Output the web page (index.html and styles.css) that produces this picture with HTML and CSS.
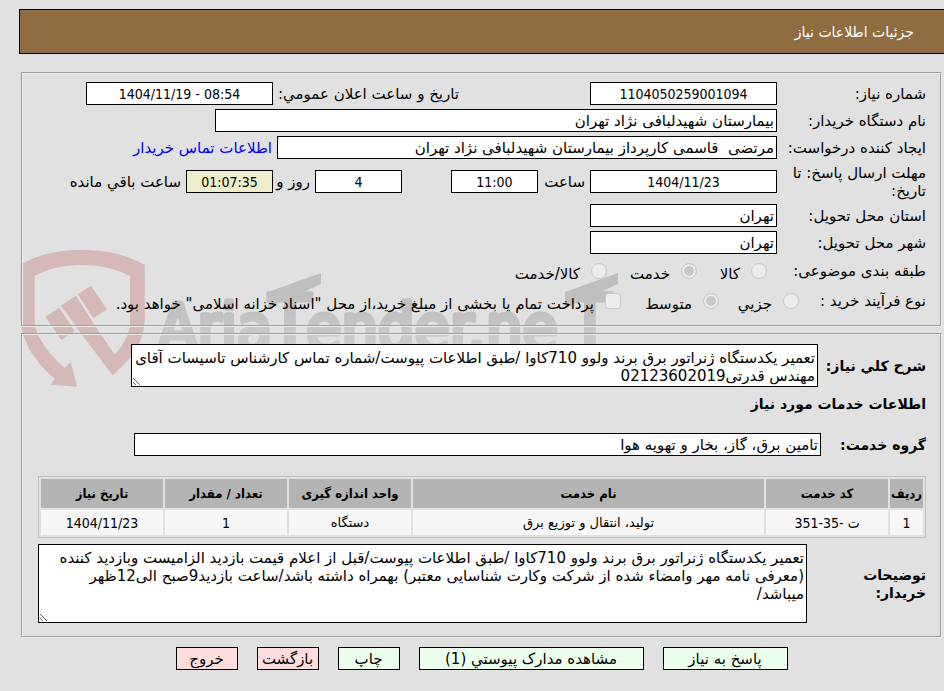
FILE: index.html
```html
<!DOCTYPE html>
<html lang="fa" dir="rtl">
<head>
<meta charset="utf-8">
<title>جزئیات اطلاعات نیاز</title>
<link rel="stylesheet" href="styles.css">
</head>
<body>
<header class="page-header"><h1>جزئیات اطلاعات نیاز</h1></header>
<main class="page">
  <svg class="watermark" width="610" height="144" viewBox="0 0 610 144" direction="ltr" aria-hidden="true">
    <defs>
      <linearGradient id="fade" gradientUnits="userSpaceOnUse" x1="0" y1="25" x2="0" y2="106">
        <stop offset="0.4" stop-color="#bfbfbf"/>
        <stop offset="1" stop-color="#cfcfcf"/>
      </linearGradient>
    </defs>
    <g transform="translate(-20 -18) scale(0.33333)" fill="#d5b8b8">
      <path d="M62 104C120 70 180 60 245 60C320 60 380 75 434 104L434 270C430 340 400 380 338 436L228 290L272 268L344 374C370 345 388 310 390 290L390 138C345 115 300 105 245 105C200 105 150 112 104 138L104 270C104 320 150 375 194 414L212 396L231 470L152 464L165 447C110 400 66 340 62 270Z"/>
      <path d="M136 260L178 233L224 303L184 330ZM182 227L228 197L274 270L236 297ZM233 193L273 167L321 238L280 265Z"/>
    </g>
    <text class="watermark-name" y="102"><tspan x="138">Aria</tspan><tspan class="watermark-cap" x="249">T</tspan><tspan x="286">ender.ne</tspan><tspan class="watermark-cap" x="549">T</tspan></text>
    <path fill="#bfbfbf" d="M248 44L301 25V36L248 60ZM545 44L598 25V36L545 60Z"/>
  </svg>

  <fieldset class="panel panel-summary">
    <div class="row">
      <label class="caption" for="need-no">شماره نیاز:</label>
      <input class="box code w-date" id="need-no" value="1104050259001094" readonly>
      <label class="announce" for="announce">تاریخ و ساعت اعلان عمومي:</label>
      <input class="box code w-date" id="announce" value="1404/11/19 - 08:54" readonly>
    </div>
    <div class="row">
      <label class="caption" for="org">نام دستگاه خریدار:</label>
      <input class="box w-org" id="org" value="بیمارستان شهیدلبافی نژاد تهران" readonly>
    </div>
    <div class="row">
      <label class="caption" for="creator">ایجاد کننده درخواست:</label>
      <input class="box w-creator" id="creator" value="مرتضی  قاسمی کارپرداز بیمارستان شهیدلبافی نژاد تهران" readonly>
      <a class="contact" href="#contact">اطلاعات تماس خریدار</a>
    </div>
    <div class="row row-deadline">
      <label class="caption" for="deadline">مهلت ارسال پاسخ: تا تاریخ:</label>
      <input class="box code w-date" id="deadline" value="1404/11/23" readonly>
      <label class="unit" for="hour">ساعت</label>
      <input class="box code w-short" id="hour" value="11:00" readonly>
      <input class="box code w-short days" id="days" value="4" readonly>
      <label class="unit unit-days" for="days">روز و</label>
      <input class="box code w-short countdown" id="countdown" value="01:07:35" readonly>
      <label class="unit-left" for="countdown">ساعت باقي مانده</label>
    </div>
    <div class="row">
      <label class="caption" for="province">استان محل تحویل:</label>
      <input class="box w-date" id="province" value="تهران" readonly>
    </div>
    <div class="row">
      <label class="caption" for="city">شهر محل تحویل:</label>
      <input class="box w-date" id="city" value="تهران" readonly>
    </div>
    <div class="row row-options" role="radiogroup" aria-labelledby="subject">
      <span class="caption caption-subject" id="subject">طبقه بندی موضوعی:</span>
      <label class="option option-goods"><input type="radio" name="subject" disabled><span>کالا</span></label>
      <label class="option option-service"><input type="radio" name="subject" checked disabled><span>خدمت</span></label>
      <label class="option"><input type="radio" name="subject" disabled><span>کالا/خدمت</span></label>
    </div>
    <div class="row row-options" role="group" aria-labelledby="process">
      <span class="caption caption-process" id="process">نوع فرآیند خرید :</span>
      <label class="option option-minor"><input type="radio" name="process" disabled><span>جزیي</span></label>
      <label class="option option-medium"><input type="radio" name="process" checked disabled><span>متوسط</span></label>
      <label class="option"><input type="checkbox" disabled><span>پرداخت تمام یا بخشی از مبلغ خرید،از محل "اسناد خزانه اسلامی" خواهد بود.</span></label>
    </div>
  </fieldset>

  <fieldset class="panel panel-details">
    <div class="row row-desc">
      <label class="strong desc-caption" for="desc">شرح کلي نیاز:</label>
      <textarea class="box area-desc" id="desc" readonly>تعمیر یکدستگاه ژنراتور برق برند ولوو 710کاوا /طبق اطلاعات پیوست/شماره تماس کارشناس تاسیسات آقای مهندس قدرتی02123602019</textarea>
    </div>
    <h2 class="strong section-title">اطلاعات خدمات مورد نیاز</h2>
    <div class="row row-group">
      <label class="strong group-caption" for="group">گروه خدمت:</label>
      <input class="box w-group" id="group" value="تامین برق، گاز، بخار و تهویه هوا" readonly>
    </div>
    <table class="services">
      <colgroup><col class="c-row"><col class="c-code"><col><col class="c-code"><col class="c-code"><col class="c-code"></colgroup>
      <thead>
        <tr><th>ردیف</th><th>کد خدمت</th><th>نام خدمت</th><th>واحد اندازه گیری</th><th>تعداد / مقدار</th><th>تاریخ نیاز</th></tr>
      </thead>
      <tbody>
        <tr><td class="num">1</td><td class="num">ت -35-351</td><td>تولید، انتقال و توزیع برق</td><td>دستگاه</td><td class="num">1</td><td class="num">1404/11/23</td></tr>
      </tbody>
    </table>
    <div class="row row-notes">
      <label class="strong notes-caption" for="notes">توضیحات خریدار:</label>
      <textarea class="box area-notes" id="notes" readonly>تعمیر یکدستگاه ژنراتور برق برند ولوو 710کاوا /طبق اطلاعات پیوست/قبل از اعلام قیمت بازدید الزامیست وبازدید کننده
(معرفی نامه مهر وامضاء شده از شرکت وکارت شناسایی معتبر) بهمراه داشته باشد/ساعت بازدید9صبح الی12ظهر
میباشد/</textarea>
    </div>
  </fieldset>

  <div class="actions">
    <button class="btn btn-reply" type="button">پاسخ به نیاز</button>
    <button class="btn btn-docs" type="button">مشاهده مدارک پیوستي (1)</button>
    <button class="btn" type="button">چاپ</button>
    <button class="btn btn-exit" type="button">بازگشت</button>
    <button class="btn btn-exit" type="button">خروج</button>
  </div>
</main>
</body>
</html>
```
FILE: styles.css
```css
* { box-sizing: border-box; }

body {
  margin: 0;
  padding-top: 9px;
  background: #e1e1e1;
  color: #000;
  font: 15px/18px "DejaVu Sans", sans-serif;
}

.page-header {
  display: flex;
  align-items: center;
  height: 45px;
  margin-left: 19px;
  padding-right: 30px;
  border: 1px solid #000;
  border-right: 0;
  background: #8f6d40;
  color: #fff;
}
.page-header h1 { margin: 0; font-size: 14px; font-weight: normal; }

.page {
  position: relative;
  margin: 18px 2px 0 21px;
}

.watermark {
  position: absolute;
  left: -1px;
  top: 176px;
  z-index: -1;
}
.watermark-name {
  font: 64px "DejaVu Sans Condensed", sans-serif;
  fill: url(#fade);
  stroke: url(#fade);
  stroke-width: 5px;
  stroke-linejoin: round;
}
.watermark-cap { font-size: 76px; }

.panel {
  min-width: 0;
  margin: 0 0 6px;
  border: 2px groove #f0f0f0;
}
.panel-summary { padding: 6px 14px 9px; }
.panel-details { padding: 9px 14px 13px 15px; margin-bottom: 9px; }

.row {
  display: flex;
  align-items: center;
  height: 27px;
}
.row-deadline { height: 41px; }
.row-options { height: 30px; }
.caption { flex: none; width: 149px; }

.box {
  flex: none;
  height: 23px;
  margin: 0;
  padding: 0 2px;
  border: 1px solid #000;
  border-radius: 0;
  background: #fff;
  color: #000;
  font: inherit;
  outline: 0;
}
.code {
  direction: ltr;
  font-family: "DejaVu Sans Condensed", "DejaVu Sans", sans-serif;
  font-size: 14px;
  text-align: center;
}
.w-date { width: 187px; }
.w-org { width: 562px; }
.w-creator { width: 500px; }
.w-short { width: 87px; }
.countdown { background: #eeeecc; }

.announce { width: 186px; margin-right: 131px; white-space: nowrap; }
.contact { margin-right: 5px; color: #0000ff; text-decoration: none; }
.unit { flex: none; width: 52px; padding-right: 5px; }
.days { margin-right: 49px; }
.unit-days { width: 42px; }
.unit-left { padding-right: 5px; white-space: nowrap; }

.caption-subject { width: 159px; }
.caption-process { width: 127px; }
.option { display: flex; align-items: center; gap: 11px; white-space: nowrap; }
.option span { padding-top: 6px; }
.option-goods { width: 70px; }
.option-service { width: 90px; }
.option-minor { width: 80px; }
.option-medium { width: 98px; }
.option input {
  flex: none;
  width: 16px;
  height: 16px;
  margin: 0;
  appearance: none;
  border: 1px solid #cacaca;
  background: #ececec;
}
.option input[type="radio"] { border-radius: 50%; }
.option input[type="radio"]:checked {
  background: #c8c8c8;
  box-shadow: inset 0 0 0 2px #ececec;
}
.option input[type="checkbox"] { border-radius: 3px; }

.strong { flex: none; font-size: 14px; font-weight: bold; }
.row-desc { height: 43px; }
.desc-caption { width: 108px; }
.area-desc, .area-notes { resize: both; overflow: auto; padding: 4px 2px 0; }
.area-desc { width: 687px; height: 43px; }
.section-title { margin: 8px 0 18px; }
.group-caption { width: 105px; }
.w-group { width: 687px; }

.services {
  width: 100%;
  margin: 18px 0 6px;
  border: 1px solid #c0c0c0;
  border-spacing: 2px;
  table-layout: fixed;
  text-align: center;
}
.services th {
  height: 29px;
  padding: 0;
  background: #b4b4b4;
  font-family: "DejaVu Sans Condensed", "DejaVu Sans", sans-serif;
  font-size: 13px;
}
.services td { height: 25px; padding: 0; background: #f7f7f7; font-size: 13px; }
.services .num {
  font-family: "DejaVu Sans Condensed", "DejaVu Sans", sans-serif;
  font-size: 14px;
}
.c-row { width: 33px; }
.c-code { width: 122px; }

.row-notes { height: 79px; }
.notes-caption { width: 119px; padding-left: 30px; }
.area-notes { flex: 1; height: 79px; }

.actions { display: flex; justify-content: center; gap: 19px; }
.btn {
  width: 62px;
  height: 23px;
  padding: 0;
  border: 1px solid #000;
  background: #ecffec;
  color: #000;
  font: inherit;
}
.btn-reply { width: 125px; }
.btn-docs { width: 225px; }
.btn-exit { background: #ffdddd; }
```
